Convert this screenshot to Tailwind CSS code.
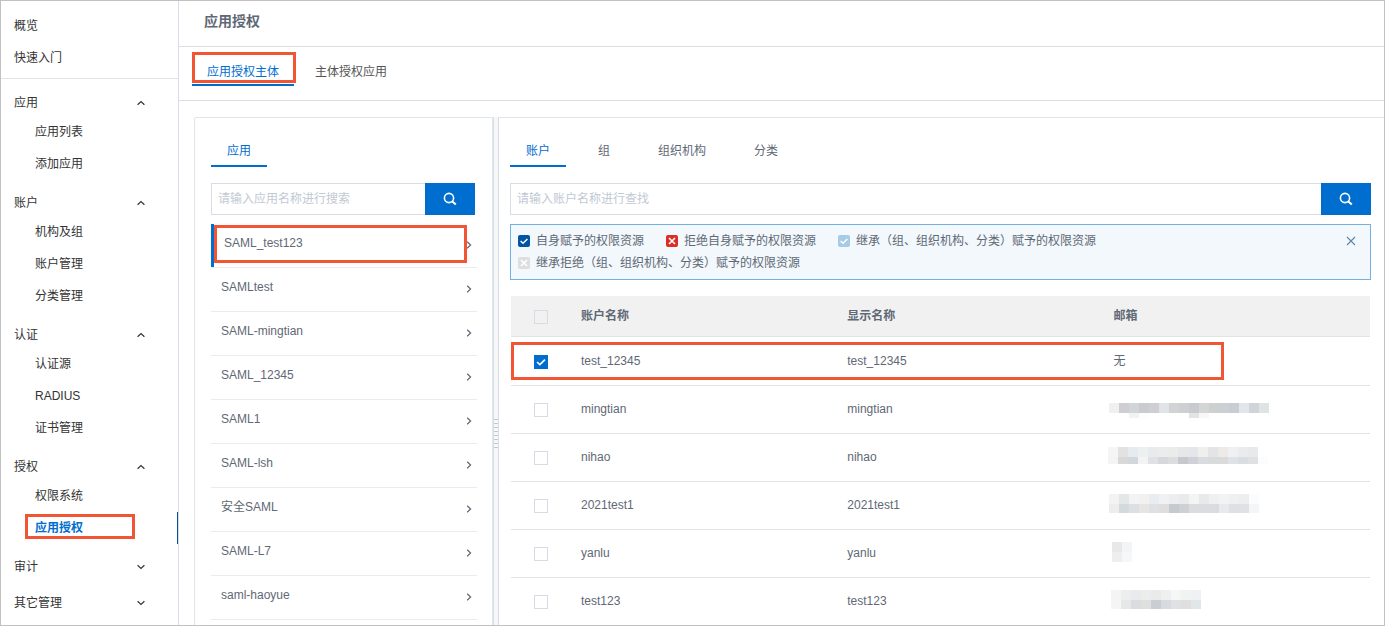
<!DOCTYPE html>
<html lang="zh-CN">
<head>
    <meta charset="UTF-8">
    <meta name="viewport" content="width=device-width, initial-scale=1.0">
    <title>应用授权</title>
    <script src="https://cdn.jsdelivr.net/npm/@tailwindcss/browser@4"></script>
</head>
<body class="h-screen flex overflow-hidden border border-[#c1c1c1] bg-white font-['Liberation_Sans','Noto_Sans_CJK_SC',sans-serif] text-xs text-[#5f6875]">
    <!-- Shared icons -->
    <svg class="hidden">
        <symbol id="chevron" viewBox="0 0 8 8"><path d="M.6 5.8 4 2.6l3.4 3.2" fill="none" stroke="currentColor" stroke-width="1.2"/></symbol>
        <symbol id="arrow" viewBox="0 0 6 8"><path d="M1.2 .8 4.6 4 1.2 7.2" fill="none" stroke="currentColor" stroke-width="1.2"/></symbol>
        <symbol id="search" viewBox="0 0 14 14"><circle cx="6" cy="6" r="4.6" fill="none" stroke="currentColor" stroke-width="1.6"/><path d="m9.4 9.4 3.4 3.2" fill="none" stroke="currentColor" stroke-width="2"/></symbol>
        <symbol id="tick" viewBox="0 0 12 12"><path d="m2.6 6 2.4 2.3 4.4-4.4" fill="none" stroke="#fff" stroke-width="1.4"/></symbol>
        <symbol id="cross" viewBox="0 0 12 12"><path d="m3 3 6 6M9 3 3 9" fill="none" stroke="#fff" stroke-width="1.6"/></symbol>
    </svg>

    <!-- Sidebar -->
    <nav class="w-[178px] shrink-0 border-r border-[#d7dee6] text-[#333]">
        <div class="pt-[9px] pb-1 mb-px border-b border-[#dfe4ea]">
            <a href="#" class="flex items-center h-8 pl-[13px]">概览</a>
            <a href="#" class="flex items-center h-8 pl-[13px]">快速入门</a>
        </div>

        <button class="flex items-center justify-between w-full h-9 pt-2.5 pl-[13px] pr-8">应用<svg class="size-2.5 p-px"><use href="#chevron"/></svg></button>
        <a href="#" class="flex items-center h-8 pl-[34px]">应用列表</a>
        <a href="#" class="flex items-center h-8 pl-[34px]">添加应用</a>

        <button class="flex items-center justify-between w-full h-9 pt-2.5 pl-[13px] pr-8">账户<svg class="size-2.5 p-px"><use href="#chevron"/></svg></button>
        <a href="#" class="flex items-center h-8 pl-[34px]">机构及组</a>
        <a href="#" class="flex items-center h-8 pl-[34px]">账户管理</a>
        <a href="#" class="flex items-center h-8 pl-[34px]">分类管理</a>

        <button class="flex items-center justify-between w-full h-9 pt-2.5 pl-[13px] pr-8">认证<svg class="size-2.5 p-px"><use href="#chevron"/></svg></button>
        <a href="#" class="flex items-center h-8 pl-[34px]">认证源</a>
        <a href="#" class="flex items-center h-8 pl-[34px]">RADIUS</a>
        <a href="#" class="flex items-center h-8 pl-[34px]">证书管理</a>

        <button class="flex items-center justify-between w-full h-9 pt-2.5 pl-[13px] pr-8">授权<svg class="size-2.5 p-px"><use href="#chevron"/></svg></button>
        <a href="#" class="flex items-center h-8 pl-[34px]">权限系统</a>
        <a href="#" class="relative flex items-center h-8 pl-[34px] border-r border-[#0a4c96] font-bold text-[#006ecf]">
            应用授权
            <span class="absolute left-6 top-0.5 w-[110px] h-[25px] border-3 border-[#f15533]"></span>
        </a>

        <button class="flex items-center justify-between w-full h-9 pt-2.5 pl-[13px] pr-8">审计<svg class="size-2.5 p-px rotate-180"><use href="#chevron"/></svg></button>
        <button class="flex items-center justify-between w-full h-9 pt-2.5 pl-[13px] pr-8">其它管理<svg class="size-2.5 p-px rotate-180"><use href="#chevron"/></svg></button>
    </nav>

    <main class="flex-1 min-w-0 flex flex-col">
        <header class="h-[46px] shrink-0 pl-[25px] pb-[5px] flex items-center border-b border-[#dedede]">
            <h1 class="text-sm font-bold">应用授权</h1>
        </header>

        <div class="h-[54px] shrink-0 pl-[13px] pt-2.5 flex items-start gap-1.5 border-b border-[#dedede]">
            <a href="#" class="relative h-[29px] px-[15px] pt-0.5 flex items-center border-b-2 border-[#006ecf] text-[#006ecf]">
                应用授权主体
                <span class="absolute left-0 -top-[5px] w-[104px] h-[31px] border-3 border-[#f15533]"></span>
            </a>
            <a href="#" class="h-[29px] px-[15px] pt-0.5 flex items-center border-b-2 border-transparent text-[#555]">主体授权应用</a>
        </div>

        <div class="flex-1 min-h-0 flex pt-4 pl-[15px]">
            <!-- Application list -->
            <section class="w-[299px] shrink-0 overflow-hidden pl-4 pr-[15px] border border-b-0 border-[#dfe5eb] rounded-t-xs">
                <div class="flex pt-4">
                    <a href="#" class="h-[33px] px-4 pt-0.5 flex items-center border-b-2 border-[#006ecf] text-[#006ecf]">应用</a>
                </div>
                <form class="flex h-8 mt-4 mr-0.5">
                    <input type="text" aria-label="应用名称" placeholder="请输入应用名称进行搜索" class="flex-1 min-w-0 px-1.5 border border-r-0 border-[#d7dde5] placeholder:text-[#c1c9d3] outline-none">
                    <button type="button" aria-label="搜索" class="w-[50px] flex items-center justify-center bg-[#006ecf] text-white"><svg class="size-3.5"><use href="#search"/></svg></button>
                </form>
                <ul id="apps" class="mt-[9px]"></ul>
            </section>

            <!-- Splitter -->
            <div class="w-1.5 shrink-0 pt-[302px] flex flex-col gap-[3px] bg-[#f7f7f7] border-x border-[#d7dee6]">
                <i class="h-px shrink-0 bg-[#c5c8cc]"></i>
                <i class="h-px shrink-0 bg-[#c5c8cc]"></i>
                <i class="h-px shrink-0 bg-[#c5c8cc]"></i>
                <i class="h-px shrink-0 bg-[#c5c8cc]"></i>
                <i class="h-px shrink-0 bg-[#c5c8cc]"></i>
                <i class="h-px shrink-0 bg-[#c5c8cc]"></i>
                <i class="h-px shrink-0 bg-[#c5c8cc]"></i>
                <i class="h-px shrink-0 bg-[#c5c8cc]"></i>
            </div>

            <!-- Accounts -->
            <section class="flex-1 min-w-0 overflow-hidden pl-[11px] pr-[13px] border-t border-[#dfe5eb]">
                <div class="flex gap-4 pt-4">
                    <a href="#" class="h-[33px] px-4 pt-0.5 flex items-center border-b-2 border-[#006ecf] text-[#006ecf]">账户</a>
                    <a href="#" class="h-[33px] px-4 pt-0.5 flex items-center border-b-2 border-transparent">组</a>
                    <a href="#" class="h-[33px] px-4 pt-0.5 flex items-center border-b-2 border-transparent">组织机构</a>
                    <a href="#" class="h-[33px] px-4 pt-0.5 flex items-center border-b-2 border-transparent">分类</a>
                </div>
                <form class="flex h-8 mt-4">
                    <input type="text" aria-label="账户名称" placeholder="请输入账户名称进行查找" class="flex-1 min-w-0 px-1.5 border border-r-0 border-[#d7dde5] placeholder:text-[#c1c9d3] outline-none">
                    <button type="button" aria-label="查找" class="w-[50px] flex items-center justify-center bg-[#006ecf] text-white"><svg class="size-3.5"><use href="#search"/></svg></button>
                </form>

                <div class="mt-[9px] pl-[7px] pr-3.5 py-[5px] flex items-start border border-[#73b1e3] bg-[#f2f8fc]">
                    <div class="flex-1 flex flex-wrap gap-x-[22px] leading-[22px]">
                        <span class="flex items-center gap-1.5"><svg class="size-3 rounded-xs bg-[#0255a5]"><use href="#tick"/></svg>自身赋予的权限资源</span>
                        <span class="flex items-center gap-1.5"><svg class="size-3 rounded-xs bg-[#d93026]"><use href="#cross"/></svg>拒绝自身赋予的权限资源</span>
                        <span class="flex items-center gap-1.5"><svg class="size-3 rounded-xs bg-[#a5cbe7]"><use href="#tick"/></svg>继承（组、组织机构、分类）赋予的权限资源</span>
                        <span class="flex items-center gap-1.5"><svg class="size-3 rounded-xs bg-[#dedede]"><use href="#cross"/></svg>继承拒绝（组、组织机构、分类）赋予的权限资源</span>
                    </div>
                    <button aria-label="关闭" class="h-[22px] flex items-center text-[#5f86a6]"><svg class="size-2.5" viewBox="0 0 10 10"><path d="m1 1 8 8M9 1 1 9" fill="none" stroke="currentColor" stroke-width="1.1"/></svg></button>
                </div>

                <div class="relative mt-4 mx-px">
                    <table class="w-full table-fixed text-left">
                        <thead>
                            <tr class="h-10 bg-[#f1f1f1] border-b border-[#e3e3e3]">
                                <th class="w-[54px] pl-[23px] pt-0.5"><input type="checkbox" aria-label="全选" class="block size-3.5 appearance-none border border-[#d5dce4]"></th>
                                <th class="w-[31%] pl-4">账户名称</th>
                                <th class="w-[31%] pl-4">显示名称</th>
                                <th class="pl-4">邮箱</th>
                            </tr>
                        </thead>
                        <tbody id="accounts"></tbody>
                    </table>
                    <div class="absolute left-0 top-[46px] w-[83%] h-[38px] border-3 border-[#f15533] pointer-events-none"></div>
                </div>
            </section>
        </div>
    </main>

    <script>
        const apps = ['SAML_test123', 'SAMLtest', 'SAML-mingtian', 'SAML_12345', 'SAML1', 'SAML-lsh', '安全SAML', 'SAML-L7', 'saml-haoyue'];

        document.getElementById('apps').innerHTML = apps.map((name, i) => `
            <li class="relative h-11 border-b border-[#ececec]">
                <a href="#" class="${i === 0 ? 'h-full flex items-center justify-between pl-2.5 pr-[5px] pb-0.5 border-l-3 border-[#006ecf]' : 'h-full flex items-center justify-between pl-2.5 pr-[5px] pb-0.5'}">
                    <span class="pb-[3px]">${name}</span>
                    <svg class="w-1.5 h-2"><use href="#arrow"/></svg>
                </a>
                ${i === 0 ? '<span class="absolute left-[3px] top-px w-[253px] h-[38px] border-3 border-[#f15533]"></span>' : ''}
            </li>`).join('');

        // Masked mail addresses: x and y offset, then [row height, ...block colours]
        const accounts = [
            { name: 'test_12345', checked: true },
            { name: 'mingtian', x: 1, y: 7, mask: [
                [10, '#f0f0ee', '#cecdd2', '#d1d4d8', '#c8ccd0', '#cfced3', '#e0e4e8', '#d2d3d4', '#cccfd3', '#c8cace', '#d3d6d6', '#cdd0ce', '#cccfd4', '#c9ccd0', '#e2e6ea', '#d0d4d8', '#dfe3e3'],
                [5, '#fff', '#fff', '#f2f2f2', '#fcfdfe', '#fff', '#fff', '#fff', '#fff', '#e2e3e5', '#f8f8f9']] },
            { name: 'nihao', x: 0, y: 3, mask: [
                [10, '#f5f5f5', '#e2e2e2', '#e6ebef', '#ecf0f1', '#e9eaec', '#ebecee', '#eaecec', '#e6e8e8', '#e3e6ea', '#eeefee', '#e3e4e6', '#ecebe9', '#eff0f2', '#eaebed', '#e8e9eb'],
                [7, '#f3f4f4', '#d8d8d9', '#d3d7db', '#f3f3f3', '#dee1e5', '#d6d7db', '#dcdddf', '#c5c8cd', '#ced1d5', '#d8dbdf', '#d9dbdb', '#d9dad9', '#dfe2e6', '#dadde1', '#dfe0e2', '#fafdff']] },
            { name: '2021test1', x: 1, y: 2, mask: [
                [10, '#f3f3f3', '#e3e7e7', '#f1f3f5', '#f2f1ef', '#e9edf1', '#f0f1f3', '#ecedef', '#e9eaec', '#f3f4f4', '#e8e9eb', '#eff0f2', '#f2f3f5', '#eff1f1', '#edeef0', '#fbfcfe'],
                [9, '#efedeb', '#d4d9db', '#dcdfe3', '#e6e5e3', '#dee0e3', '#dddedd', '#c5cad0', '#cfd0d3', '#dcdcdf', '#dbdce0', '#d8dbdf', '#e8e9ec', '#dfe0e3', '#dfe1e4', '#f5f5f5']] },
            { name: 'yanlu', x: 4, y: 2, mask: [
                [10, '#e7e8e9', '#f3f4f6'],
                [10, '#eeeeee', '#f5f7fa']] },
            { name: 'test123', x: 3, y: 2, mask: [
                [10, '#f4f4f4', '#eceeed', '#e9eaec', '#ebecec', '#e9eaec', '#efefef', '#f5f7f7', '#f1f2f2', '#eff1f2'],
                [9, '#f5f5f5', '#e6e8e7', '#d9dde0', '#dfdfdf', '#cacdd1', '#d7dadf', '#e0e1e4', '#dfdfdf', '#e1e7e9']] }
        ];

        function drawMask({ x, y, mask }) {
            let rects = '';
            for (const [height, ...colors] of mask) {
                colors.forEach((color, i) => {
                    rects += `<rect x="${x + i * 10}" y="${y}" width="10" height="${height}" fill="${color}"/>`;
                });
                y += height;
            }
            return `<svg class="block w-[170px] h-7" shape-rendering="crispEdges">${rects}</svg>`;
        }

        document.getElementById('accounts').innerHTML = accounts.map(account => `
            <tr class="${account.checked ? 'h-[49px] border-b border-[#e3e3e3]' : 'h-12 border-b border-[#e3e3e3]'}">
                <td class="pl-[23px] pt-0.5">
                    <label class="relative block size-3.5">
                        <input type="checkbox" aria-label="${account.name}" ${account.checked ? 'checked' : ''} class="peer block size-3.5 appearance-none border border-[#d5dce4] checked:border-[#006ecf] checked:bg-[#006ecf]">
                        <svg class="absolute inset-0 size-3.5 hidden peer-checked:block"><use href="#tick"/></svg>
                    </label>
                </td>
                <td class="pl-4">${account.name}</td>
                <td class="pl-4">${account.name}</td>
                ${account.mask ? `<td class="pl-2.5 pt-0.5">${drawMask(account)}</td>` : '<td class="pl-4">无</td>'}
            </tr>`).join('');
    </script>
</body>
</html>
